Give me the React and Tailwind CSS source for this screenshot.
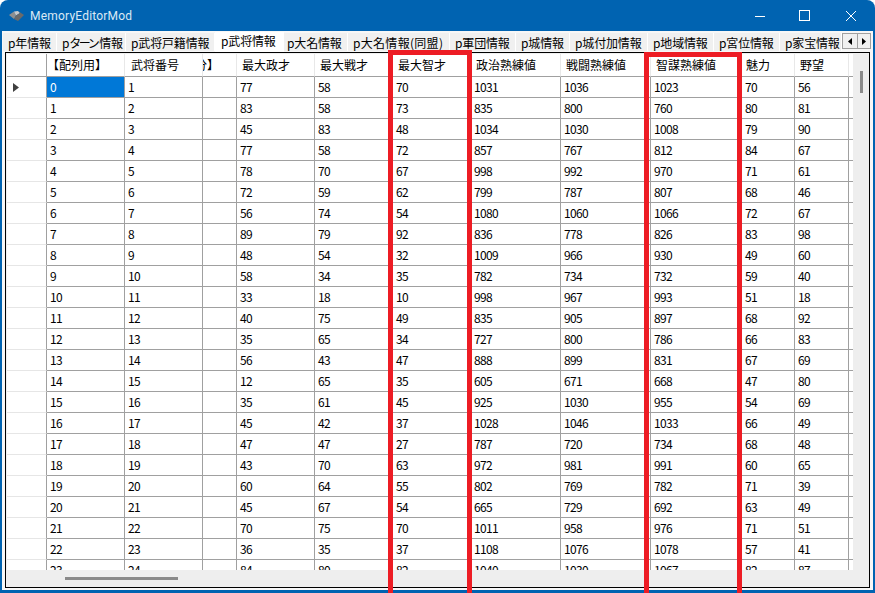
const tabs = [
  ["p年情報", "w-[54px] pl-[5px] tracking-[-0.15px]"],
  [<>p<span className="tracking-[-2.5px]">ターン</span><span className="ml-[2px]">情報</span></>, "w-[69px] pl-[5px] tracking-[-0.15px]"],
  ["p武将戸籍情報", "w-[89px] pl-[5px] tracking-[-0.15px]"],
  ["p武将情報", "w-[69px] pl-[6px] tracking-[-0.15px]", true],
  ["p大名情報", "w-[64px] pl-[3px] tracking-[-0.15px]"],
  ["p大名情報(同盟)", "w-[102px] pl-[5px] tracking-[0.3px]"],
  ["p軍団情報", "w-[66px] pl-[5px] tracking-[-0.15px]"],
  ["p城情報", "w-[54px] pl-[5px] tracking-[-0.15px]"],
  ["p城付加情報", "w-[78px] pl-[5px] tracking-[-0.15px]"],
  ["p地域情報", "w-[66px] pl-[5px] tracking-[-0.15px]"],
  ["p宮位情報", "w-[66px] pl-[5px] tracking-[-0.15px]"],
  ["p家宝情報", "w-[62px] pl-[5px] tracking-[-0.15px]"],
];

const rows = [
  [0, 1, 77, 58, 70, 1031, 1036, 1023, 70, 56],
  [1, 2, 83, 58, 73, 835, 800, 760, 80, 81],
  [2, 3, 45, 83, 48, 1034, 1030, 1008, 79, 90],
  [3, 4, 77, 58, 72, 857, 767, 812, 84, 67],
  [4, 5, 78, 70, 67, 998, 992, 970, 71, 61],
  [5, 6, 72, 59, 62, 799, 787, 807, 68, 46],
  [6, 7, 56, 74, 54, 1080, 1060, 1066, 72, 67],
  [7, 8, 89, 79, 92, 836, 778, 826, 83, 98],
  [8, 9, 48, 54, 32, 1009, 966, 930, 49, 60],
  [9, 10, 58, 34, 35, 782, 734, 732, 59, 40],
  [10, 11, 33, 18, 10, 998, 967, 993, 51, 18],
  [11, 12, 40, 75, 49, 835, 905, 897, 68, 92],
  [12, 13, 35, 65, 34, 727, 800, 786, 66, 83],
  [13, 14, 56, 43, 47, 888, 899, 831, 67, 69],
  [14, 15, 12, 65, 35, 605, 671, 668, 47, 80],
  [15, 16, 35, 61, 45, 925, 1030, 955, 54, 69],
  [16, 17, 45, 42, 37, 1028, 1046, 1033, 66, 49],
  [17, 18, 47, 47, 27, 787, 720, 734, 68, 48],
  [18, 19, 43, 70, 63, 972, 981, 991, 60, 65],
  [19, 20, 60, 64, 55, 802, 769, 782, 71, 39],
  [20, 21, 45, 67, 54, 665, 729, 692, 63, 49],
  [21, 22, 70, 75, 70, 1011, 958, 976, 71, 51],
  [22, 23, 36, 35, 37, 1108, 1076, 1078, 57, 41],
  [23, 24, 84, 80, 82, 1040, 1030, 1067, 82, 87],
];

const headers = [
  ["【配列用】", "pl-0"],
  ["武将番号", "pl-[6px]"],
  ["分】", "-ml-[8px]"],
  ["最大政才", "pl-[5px]"],
  ["最大戦才", "pl-[5px]"],
  ["最大智才", "pl-[5px]"],
  ["政治熟練値", "pl-[5px]"],
  ["戦闘熟練値", "pl-[5px]"],
  ["智謀熟練値", "pl-[5px]"],
  ["魅力", "pl-[4px]"],
  ["野望", "pl-[5px]"],
];

const gridCols =
  "grid grid-cols-[40px_78px_78px_34px_78px_78px_78px_90px_90px_91px_53px_54px_4px]";

function Cell({ value, selected }) {
  return (
    <div
      className={
        "flex items-center overflow-hidden border-r border-b border-[#a0a0a0] pl-[3px] text-[12px] tracking-[-0.66px] " +
        (selected ? "bg-[#0078d7] text-white" : "bg-white text-black")
      }
    >
      {value}
    </div>
  );
}

function Row({ data, index }) {
  const cells = [data[0], data[1], "", ...data.slice(2)];
  return (
    <div className={gridCols + " h-[21px]"}>
      <div className="flex items-center border-r border-b border-r-[#a0a0a0] border-b-[#e6e6e6] bg-white pl-[6px]">
        {index === 0 && (
          <svg width="6" height="9" viewBox="0 0 6 9">
            <polygon points="0,0 6,4.5 0,9" fill="#404040" />
          </svg>
        )}
      </div>
      {cells.map((v, i) => (
        <Cell key={i} value={v} selected={index === 0 && i === 0} />
      ))}
      <div className="border-b border-[#a0a0a0] bg-white" />
    </div>
  );
}

function HeaderCell({ label, cls }) {
  return (
    <div className="flex items-center overflow-hidden whitespace-nowrap border-r border-b border-r-[#e8e8e8] border-b-[#a0a0a0] bg-white text-[12px] text-black">
      <span className={"block " + cls}>{label}</span>
    </div>
  );
}

export default function App() {
  return (
    <div className="relative flex h-[593px] w-[875px] flex-col overflow-hidden rounded-t-[8px] bg-[#0063b1] font-['Noto_Sans_CJK_JP',sans-serif]">
      {/* title bar */}
      <div className="flex h-[31px] shrink-0 items-center pl-[9px] text-[#dbe9f5]">
        <svg width="15" height="10" viewBox="0 0 15 10">
          <polygon points="0,4 5,0.5 7,4.5 5,8" fill="#8f8f8f" />
          <polygon points="5,0.5 9,0 11,2 7,4.5" fill="#c9c9c9" />
          <polygon points="9,0 15,4 9,10 5,8 7,4.5 11,2" fill="#6a6a6a" />
        </svg>
        <span className="ml-[6px] font-['Roboto'] text-[12px] tracking-[0.2px]">MemoryEditorMod</span>
        <div className="ml-auto flex items-center pr-[19px]">
          <svg width="10" height="10" viewBox="0 0 10 10" className="mr-[34px]">
            <line x1="0" y1="5.5" x2="10" y2="5.5" stroke="#ffffff" strokeWidth="1" />
          </svg>
          <svg width="11" height="11" viewBox="0 0 11 11" className="mr-[36px]">
            <rect x="0.5" y="0.5" width="10" height="10" fill="none" stroke="#ffffff" strokeWidth="1" />
          </svg>
          <svg width="10" height="10" viewBox="0 0 10 10">
            <path d="M0 0 L10 10 M10 0 L0 10" stroke="#ffffff" strokeWidth="1" fill="none" />
          </svg>
        </div>
      </div>

      {/* client area */}
      <div className="mx-[2px] mb-[3px] flex flex-1 flex-col bg-[#f7f7f7] px-[3px] pt-px">
        {/* tab strip */}
        <div className="flex h-[20px] shrink-0">
          <div className="-ml-[2px] flex">
            {tabs.map(([label, cls, active], i) => (
              <div
                key={i}
                className={
                  "overflow-hidden whitespace-nowrap border-r border-white text-[12px] text-black " +
                  cls +
                  (active
                    ? " bg-white leading-[17px]"
                    : " mt-px mb-px bg-[#f0f0f0] leading-[19px]")
                }
              >
                {label}
              </div>
            ))}
          </div>
          <div className="mt-px flex h-[16px]">
            <div className="flex w-[16px] items-center justify-center border border-[#a0a0a0] bg-[#f0f0f0]">
              <svg width="4" height="7" viewBox="0 0 4 7">
                <polygon points="4,0 0,3.5 4,7" fill="#000000" />
              </svg>
            </div>
            <div className="flex w-[13px] items-center justify-center border border-l-0 border-[#a0a0a0] bg-[#f0f0f0]">
              <svg width="4" height="7" viewBox="0 0 4 7">
                <polygon points="0,0 4,3.5 0,7" fill="#000000" />
              </svg>
            </div>
          </div>
        </div>

        {/* tab page */}
        <div className="flex h-[536px] w-[865px] flex-col border border-black bg-[#f0f0f0] pl-px pt-px">
          <div className="flex h-[516px]">
            {/* grid */}
            <div className="h-full w-[846px] overflow-hidden bg-white">
              <div className={gridCols + " h-[23px]"}>
                <div className="border-r border-b border-r-[#a0a0a0] border-b-[#a0a0a0] bg-white" />
                {headers.map(([h, cls]) => (
                  <HeaderCell key={h} label={h} cls={cls} />
                ))}
                <div className="border-b border-[#a0a0a0] bg-white" />
              </div>
              {rows.map((r, i) => (
                <Row key={i} data={r} index={i} />
              ))}
            </div>
            {/* vertical scrollbar */}
            <div className="w-[16px] bg-[#eeeeee] pl-[7px] pt-[17px]">
              <div className="h-[22px] w-[3px] bg-[#8a8a8a]" />
            </div>
          </div>
          {/* horizontal scrollbar */}
          <div className="flex h-[17px] items-center bg-[#eeeeee] pl-[58px]">
            <div className="h-[3px] w-[113px] bg-[#8a8a8a]" />
          </div>
        </div>
      </div>

      {/* red highlight rectangles */}
      <div className="absolute left-[388px] top-[50px] h-[560px] w-[84px] border-[5px] border-[#ed1c24]" />
      <div className="absolute left-[644px] top-[52px] h-[560px] w-[98px] border-[5px] border-[#ed1c24]" />
    </div>
  );
}
